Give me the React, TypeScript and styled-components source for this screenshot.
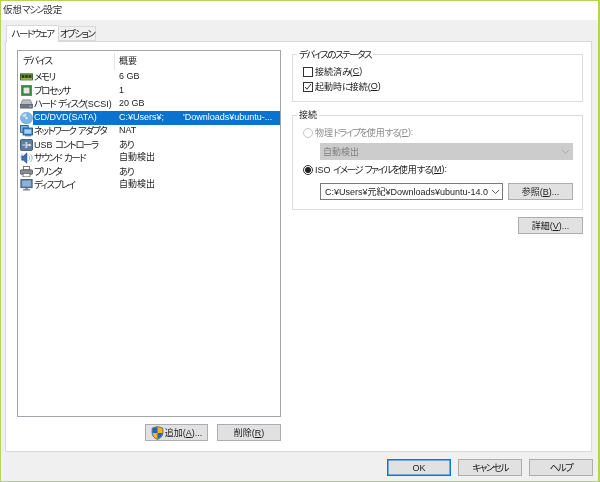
import React from "react";
import styled, { createGlobalStyle } from "styled-components";

const Global = createGlobalStyle`
  html, body { margin: 0; padding: 0; background: #fff; }
  * { box-sizing: border-box; }
  body { font-family: "Liberation Sans", "Noto Sans CJK JP", sans-serif; font-size: 9px; color: #1c1c1c; font-feature-settings: "palt" 1; }
`;

const Win = styled.div`
  width: 600px; height: 482px; display: flex; flex-direction: column;
  border: 1px solid #b4d45c; border-right-width: 2px; background: #f0f0f0;
  overflow: hidden; filter: blur(0.35px);
`;
const TitleBar = styled.div`
  height: 19px; background: #fff; padding-left: 2px; line-height: 18px; font-size: 9.5px; color: #333; flex: none;
`;
const TabStrip = styled.div`
  height: 21px; flex: none; display: flex; align-items: flex-end; padding-left: 5px; position: relative; z-index: 1;
`;
const Tab = styled.div<{ $active?: boolean }>`
  height: ${p => (p.$active ? 17 : 15)}px;
  width: ${p => (p.$active ? 53 : 38)}px;
  background: ${p => (p.$active ? "#fff" : "#f0f0f0")};
  border: 1px solid #d9d9d9;
  border-bottom: ${p => (p.$active ? "none" : "1px solid #d9d9d9")};
  ${p => (p.$active ? "margin-bottom:-1px;" : "margin-left:-1px;")}
  text-align: center; white-space: nowrap; line-height: ${p => (p.$active ? 15 : 14)}px;
`;
const Kana = styled.span`
  font-size: 9.5px; letter-spacing: -1.5px;
`;
const Panel = styled.div`
  margin: 0 6px 0 4px; height: 411px; flex: none; background: #fff; border: 1px solid #d9d9d9;
  display: flex; padding: 8px 8px 0 11px; gap: 11px;
`;
const Left = styled.div`
  width: 264px; flex: none; display: flex; flex-direction: column;
`;
const ListBox = styled.div`
  height: 367px; flex: none; border: 1px solid #a0a6ac; padding: 1px 0 0 0; background: #fff;
`;
const Head = styled.div`
  height: 18px; display: grid; grid-template-columns: 97px 1fr; line-height: 16px; padding-top: 1px;
`;
const HeadCell = styled.div<{ $first?: boolean }>`
  padding-left: ${p => (p.$first ? 5 : 4)}px;
  ${p => (p.$first ? "border-right: 1px solid #e4e4e4;" : "")}
`;
const Row = styled.div`
  height: 13.55px; display: grid; grid-template-columns: 15px 86px 1fr; line-height: 13.5px; white-space: nowrap;
`;
const IconCell = styled.div`
  display: flex; align-items: center; justify-content: flex-end; height: 14px;
  svg { display: block; width: 13px; height: auto; flex: none; }
`;
const Name = styled.div<{ $sel?: boolean }>`
  padding-left: 1px;
  ${p => (p.$sel ? "background:#0a73cf;color:#fff;" : "")}
`;
const Value = styled.div<{ $sel?: boolean }>`
  overflow: hidden;
  ${p => (p.$sel ? "background:#0a73cf;color:#fff;" : "")}
`;
const Gap = styled.span`
  display: inline-block; width: 19px; height: 1px;
`;
const Foot = styled.div`
  display: flex; justify-content: flex-end; gap: 9px; margin-top: 7px;
`;
const Btn = styled.button<{ $w: number; $h?: number; $def?: boolean }>`
  width: ${p => p.$w}px; height: ${p => p.$h ?? 17}px; flex: none;
  background: #e1e1e1; border: 1px solid ${p => (p.$def ? "#0a78d7" : "#adadad")};
  ${p => (p.$def ? "box-shadow: inset 0 0 0 0.5px #0a78d7;" : "")}
  font: inherit; color: #1c1c1c; padding: 0; line-height: 14px;
  display: flex; align-items: center; justify-content: center;
  svg { margin-right: 1px; }
`;
const U = styled.span` text-decoration: underline; `;
const Right = styled.div`
  flex: 1; display: flex; flex-direction: column; padding-top: 4px; min-width: 0;
`;
const Group = styled.div<{ $h: number; $top?: number }>`
  height: ${p => p.$h}px; margin-top: ${p => p.$top ?? 0}px; border: 1px solid #dcdcdc; position: relative; padding: 9px 0 0 10px; flex: none;
`;
const Legend = styled.div`
  position: absolute; top: -7px; left: 4px; background: #fff; padding: 0 2px; line-height: 13px;
`;
const CheckRow = styled.div`
  display: flex; align-items: center; height: 15px; line-height: 15px; white-space: pre;
`;
const Box = styled.div`
  width: 10px; height: 10px; border: 1px solid #333; display: flex; align-items: center; justify-content: center; background: #fff; margin-right: 2px;
`;
const RadioRow = styled.div<{ $off?: boolean }>`
  display: flex; align-items: center; height: 15px; line-height: 15px; white-space: pre;
  color: ${p => (p.$off ? "#8b8b8b" : "#1c1c1c")};
`;
const Radio = styled.div<{ $off?: boolean; $on?: boolean }>`
  width: 10px; height: 10px; border-radius: 50%; border: 1px solid ${p => (p.$off ? "#c4c4c4" : "#333")}; background: #fff;
  display: flex; align-items: center; justify-content: center; margin-right: 2px;
  &::after { content: ""; width: 6px; height: 6px; border-radius: 50%; background: ${p => (p.$on ? "#222" : "transparent")}; }
`;
const SelectOff = styled.div`
  margin: 3px 0 2px 17px; width: 253px; height: 17px; background: #cccccc; color: #7f7f7f;
  display: flex; align-items: center; justify-content: space-between; padding: 0 3px;
`;
const SelectRow = styled.div`
  display: flex; gap: 5px; margin: 6px 0 0 17px; align-items: flex-start;
`;
const SelectOn = styled.div`
  width: 183px; height: 17px; background: #fff; border: 1px solid #7a7a7a; color: #1c1c1c;
  display: flex; align-items: center; justify-content: space-between; padding: 0 2px 0 4px; white-space: nowrap;
`;
const Detail = styled.div`
  display: flex; justify-content: flex-end; margin-top: 7px;
`;
const Bottom = styled.div`
  flex: 1; display: flex; justify-content: flex-end; gap: 7px; padding: 7px 5px 0 0;
`;
const Chev = ({ c = "#555" }: { c?: string }) => (
  <svg width="9" height="6" viewBox="0 0 9 6"><path d="M1 1l3.5 3.5L8 1" fill="none" stroke={c} /></svg>
);

/* Wraps each kana run in a tightened span: the reference font sets kana far narrower than kanji. */
const T = ({ s }: { s: string }) => (
  <span>
    {s.split(/([\u3040-\u30ff]+)/).map((part, i) =>
      i % 2 ? <Kana key={i}>{part}</Kana> : part
    )}
  </span>
);

const Ic = {
  mem: <svg viewBox="0 0 15 9"><rect x="0.5" y="1" width="14" height="7" fill="#6f9b3a" stroke="#2f5a1a"/><path d="M2 2.500h3v3H2zM6 2.500h3v3H6zM10 2.500h3v3h-3z" fill="#23301a"/><path d="M1 7h13" stroke="#d7c65a"/></svg>,
  cpu: <svg viewBox="0 0 13 13"><rect x="1" y="1" width="11" height="11" fill="#4e9a52"/><rect x="3" y="3" width="7" height="7" fill="#e4e8e0" stroke="#2f6a35"/></svg>,
  hdd: <svg viewBox="0 0 15 11"><path d="M3 1h9l2.500 6h-14z" fill="#b7bcc4" stroke="#6c727a" strokeWidth=".7"/><rect x="0.5" y="6.500" width="14" height="4" fill="#6c7885" stroke="#4a525a" strokeWidth=".7"/><path d="M11 8.500h2" stroke="#bfe3ff"/></svg>,
  cd: <svg viewBox="0 0 15 14"><ellipse cx="7.5" cy="7" rx="7" ry="6.800" fill="#7fb6e4" stroke="#4f8fc7" strokeWidth=".6"/><path d="M2 5a6 6 0 0 1 5-3.500L7.500 7z" fill="#c5e2f7"/><circle cx="7.5" cy="7" r="1.800" fill="#e8f3fb" stroke="#4f8fc7" strokeWidth=".5"/></svg>,
  net: <svg viewBox="0 0 15 14"><rect x="0.5" y="0.5" width="9" height="8" fill="#7ab4e6" stroke="#265a8c"/><rect x="3.5" y="3.5" width="11" height="8" fill="#3d8ad0" stroke="#1f5080"/><rect x="5" y="5" width="8" height="5" fill="#9fd0f5"/><path d="M6 12.500h7" stroke="#1f5080"/></svg>,
  usb: <svg viewBox="0 0 14 13"><rect x="0.5" y="0.5" width="13" height="12" rx="1.5" fill="#5b7da0" stroke="#3c5a78"/><path d="M2.500 6.500h9M8 6.500L6 4h2M8 6.500L6 9h2M11.500 6.500l-1.500-1v2z" fill="none" stroke="#fff" strokeWidth=".9"/></svg>,
  snd: <svg viewBox="0 0 15 14"><path d="M4 4.500L8 1v12L4 9.500H2v-5z" fill="#3d6fb4" stroke="#1f3f74" strokeWidth=".6"/><path d="M10 4a4 4 0 0 1 0 6M12 2.500a6 6 0 0 1 0 9M3 2a6 6 0 0 0-2 5" fill="none" stroke="#7fa8dc"/></svg>,
  prn: <svg viewBox="0 0 15 13"><rect x="4" y="0.5" width="7" height="4" fill="#fff" stroke="#666"/><rect x="0.5" y="4.5" width="14" height="5" rx="1" fill="#8b8f96" stroke="#4d5056"/><rect x="3.5" y="8.500" width="8" height="4" fill="#fff" stroke="#666"/></svg>,
  dsp: <svg viewBox="0 0 15 14"><rect x="1" y="0.5" width="13" height="9.5" fill="#5c84b0" stroke="#45586c"/><rect x="2.5" y="2" width="10" height="6.5" fill="#8db1d6"/><path d="M6 10.500h3v1.500H6z" fill="#78838e"/><path d="M3.500 12.500h8" stroke="#6d7680" strokeWidth="1.4"/></svg>,
};

const rows: [React.ReactNode, string, string, boolean?][] = [
  [Ic.mem, "メモリ", "6 GB"],
  [Ic.cpu, "プロセッサ", "1"],
  [Ic.hdd, "ハード ディスク(SCSI)", "20 GB"],
  [Ic.cd, "CD/DVD(SATA)", "", true],
  [Ic.net, "ネットワーク アダプタ", "NAT"],
  [Ic.usb, "USB コントローラ", "あり"],
  [Ic.snd, "サウンド カード", "自動検出"],
  [Ic.prn, "プリンタ", "あり"],
  [Ic.dsp, "ディスプレイ", "自動検出"],
];

export default function App() {
  return (
    <>
      <Global />
      <Win>
        <TitleBar><T s="仮想マシン設定" /></TitleBar>
        <TabStrip>
          <Tab $active><T s="ハードウェア" /></Tab>
          <Tab><T s="オプション" /></Tab>
        </TabStrip>
        <Panel>
          <Left>
            <ListBox>
              <Head>
                <HeadCell $first><T s="デバイス" /></HeadCell>
                <HeadCell>概要</HeadCell>
              </Head>
              {rows.map(([ic, n, v, sel]) => (
                <Row key={n}>
                  <IconCell>{ic}</IconCell>
                  <Name $sel={sel}><T s={n} /></Name>
                  <Value $sel={sel}>
                    {sel ? <>C:¥Users¥;<Gap />'Downloads¥ubuntu-...</> : <T s={v} />}
                  </Value>
                </Row>
              ))}
            </ListBox>
            <Foot>
              <Btn $w={63}>
                <svg width="13" height="14" viewBox="0 0 12 13">
                  <path d="M6 .5l5 1.500v4.500c0 3-2.500 5-5 6-2.500-1-5-3-5-6V2z" fill="#f2b415" stroke="#34569c" strokeWidth=".7" />
                  <path d="M6 1v5.500H1.300V2zM6 6.500h4.700c-.2 2.500-2.300 4.500-4.700 5.500z" fill="#2a62b8" />
                </svg>
                追加(<U>A</U>)...
              </Btn>
              <Btn $w={64}>削除(<U>R</U>)</Btn>
            </Foot>
          </Left>
          <Right>
            <Group $h={48}>
              <Legend><T s="デバイスのステータス" /></Legend>
              <CheckRow><Box /><T s="接続済み(" /><U>C</U>)</CheckRow>
              <CheckRow>
                <Box><svg width="8" height="8" viewBox="0 0 8 8"><path d="M1 4l2 2.200L7 1" fill="none" stroke="#333" /></svg></Box>
                <T s="起動時に接続(" /><U>O</U>)
              </CheckRow>
            </Group>
            <Group $h={95} $top={13}>
              <Legend>接続</Legend>
              <RadioRow $off><Radio $off /><T s="物理ドライブを使用する(" /><U>P</U>):</RadioRow>
              <SelectOff>自動検出<Chev c="#a8a8a8" /></SelectOff>
              <RadioRow><Radio $on /><T s="ISO イメージ ファイルを使用する(" /><U>M</U>):</RadioRow>
              <SelectRow>
                <SelectOn>C:¥Users¥元紀¥Downloads¥ubuntu-14.0<Chev /></SelectOn>
                <Btn $w={65}>参照(<U>B</U>)...</Btn>
              </SelectRow>
            </Group>
            <Detail><Btn $w={65}>詳細(<U>V</U>)...</Btn></Detail>
          </Right>
        </Panel>
        <Bottom>
          <Btn $w={64} $h={17} $def>OK</Btn>
          <Btn $w={64} $h={17}><T s="キャンセル" /></Btn>
          <Btn $w={64} $h={17}><T s="ヘルプ" /></Btn>
        </Bottom>
      </Win>
    </>
  );
}
